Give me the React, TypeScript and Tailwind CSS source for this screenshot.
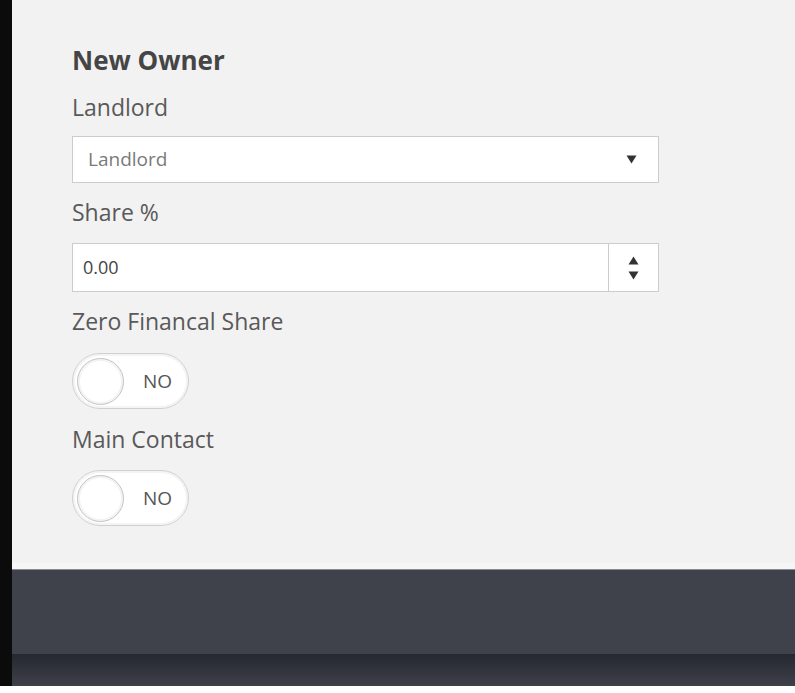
import React from "react";

function Toggle() {
  return (
    <div className="w-[117px] h-[56px] rounded-full border border-[#d0d0d0] bg-white flex items-center pl-[4px] shadow-[inset_0_0_0_2px_#f4f4f4]">
      <div className="w-[47px] h-[47px] rounded-full border border-[#c2c2c2] bg-white shadow-[inset_0_0_0_2px_#f3f3f3]" />
      <span className="ml-[19px] text-[19px] text-[#555] leading-none">NO</span>
    </div>
  );
}

function Down() {
  return (
    <svg width="11" height="9" viewBox="0 0 11 9">
      <path d="M0.5 0.5 L10.5 0.5 L5.5 8.5 Z" fill="#333" />
    </svg>
  );
}

function Up() {
  return (
    <svg width="11" height="9" viewBox="0 0 11 9">
      <path d="M0.5 8.5 L10.5 8.5 L5.5 0.5 Z" fill="#333" />
    </svg>
  );
}

export default function App() {
  return (
    <div className="w-[795px] h-[693px] bg-white" style={{ fontFamily: '"Open Sans", "Noto Sans", sans-serif' }}>
      <div className="flex h-[686px]">
        <div className="w-[12px] bg-[#0b0b0c]" />
        <div className="flex-1 flex flex-col">
          <div className="h-[563px] bg-[#f2f2f2] pl-[60px] pt-[43px]">
            <div className="text-[26px] leading-[34px] font-bold text-[#454545]">New Owner</div>
            <div className="mt-[14px] text-[23px] leading-[32px] text-[#595959]">Landlord</div>
            <div className="mt-[13px] w-[587px] h-[47px] bg-white border border-[#cccccc] flex items-center justify-between pl-[15px] pr-[21px]">
              <span className="text-[19px] text-[#7a7a7a]">Landlord</span>
              <Down />
            </div>
            <div className="mt-[13px] text-[23px] leading-[32px] text-[#595959]">Share %</div>
            <div className="mt-[15px] w-[587px] h-[49px] bg-white border border-[#cccccc] flex items-stretch">
              <div className="flex-1 flex items-center pl-[10px] text-[18px] text-[#444]">0.00</div>
              <div className="w-[50px] border-l border-[#cccccc] flex flex-col items-center justify-center gap-[6px]">
                <Up />
                <Down />
              </div>
            </div>
            <div className="mt-[13px] text-[23px] leading-[32px] text-[#595959]">Zero Financal Share</div>
            <div className="mt-[16px]"><Toggle /></div>
            <div className="mt-[14px] text-[23px] leading-[32px] text-[#595959]">Main Contact</div>
            <div className="mt-[15px]"><Toggle /></div>
          </div>
          <div className="h-[7px] bg-[#f6f6f8] border-b border-[#8a8a8a]" />
          <div className="h-[84px] bg-[#40424b]" />
          <div className="flex-1 bg-gradient-to-b from-[#262830] to-[#3f414a]" />
        </div>
      </div>
    </div>
  );
}
